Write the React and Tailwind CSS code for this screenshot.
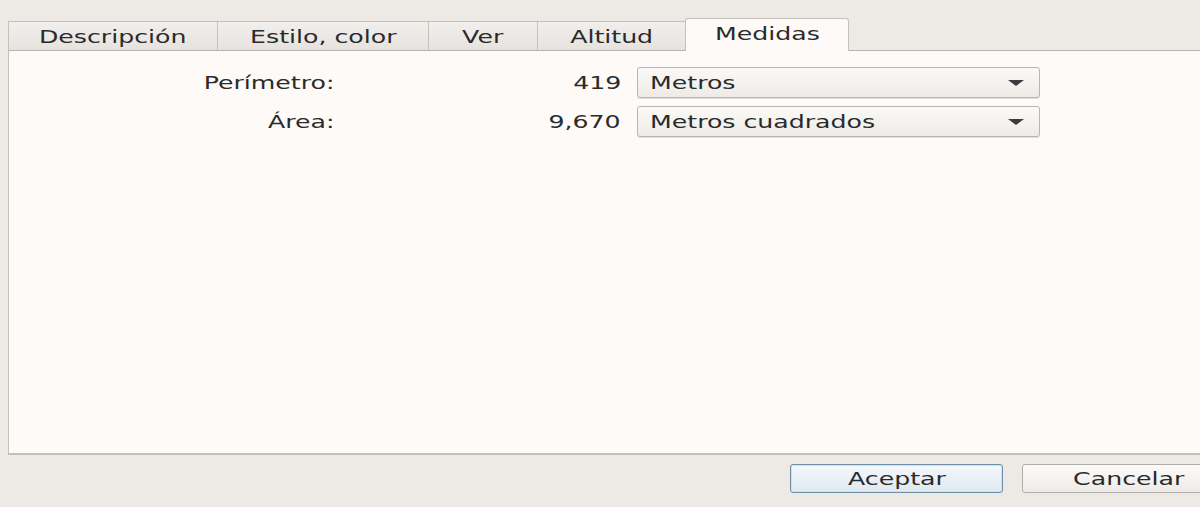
import React from 'react'

const TABS = [
  { label: 'Descripción', w: 'w-[209px]' },
  { label: 'Estilo, color', w: 'w-[211px]' },
  { label: 'Ver', w: 'w-[109px]' },
  { label: 'Altitud', w: 'w-[148px]' },
]

// the shot is stretched sideways, so glyphs are widened to match
function Wide({ children, origin = 'origin-center' }) {
  return <span className={`inline-block scale-x-[1.4] ${origin}`}>{children}</span>
}

function Combo({ value }) {
  return (
    <div className="flex h-[31px] w-[403px] items-center justify-between rounded-[3px] border border-[#b9b6b1] bg-gradient-to-b from-[#fbfaf8] to-[#eeebe7] pl-[12px] pr-[14px] shadow-[0_1px_0_#e2dfdb]">
      <Wide origin="origin-left">{value}</Wide>
      <svg width="18" height="8" viewBox="0 0 18 8">
        <path d="M1 1 L17 1 L9 7 Z" fill="#3a3a3a" />
      </svg>
    </div>
  )
}

export default function App() {
  return (
    <div
      className="h-[507px] w-[1200px] overflow-hidden bg-[#edeae6] text-[18px] text-[#2a2a2a]"
      style={{ fontFamily: '"DejaVu Sans", Verdana, sans-serif' }}
    >
      {/* tab strip */}
      <div className="flex h-[50px] items-end pl-[8px]">
        {TABS.map(t => (
          <div
            key={t.label}
            className={`${t.w} flex h-[29px] shrink-0 items-center justify-center border-t border-l border-[#c4c1bc] bg-gradient-to-b from-[#f1efec] to-[#e6e3df]`}
          >
            <Wide>{t.label}</Wide>
          </div>
        ))}
        <div className="-mb-px flex h-[33px] w-[164px] shrink-0 items-center justify-center rounded-t-[3px] border border-b-0 border-[#c4c1bc] bg-[#fdfaf7] pb-[4px]">
          <Wide>Medidas</Wide>
        </div>
      </div>

      {/* page */}
      <div className="ml-[8px] h-[405px] w-[1200px] border-t border-l border-b-2 border-t-[#b8b5b0] border-l-[#c4c1bc] border-b-[#c2bfba] bg-[#fdfaf7] pt-[16px]">
        <div className="flex items-center">
          <div className="w-[325px] text-right"><Wide origin="origin-right">Perímetro:</Wide></div>
          <div className="w-[287px] text-right"><Wide origin="origin-right">419</Wide></div>
          <div className="ml-[16px]"><Combo value="Metros" /></div>
        </div>
        <div className="mt-[8px] flex items-center">
          <div className="w-[325px] text-right"><Wide origin="origin-right">Área:</Wide></div>
          <div className="w-[287px] text-right"><Wide origin="origin-right">9,670</Wide></div>
          <div className="ml-[16px]"><Combo value="Metros cuadrados" /></div>
        </div>
      </div>

      {/* buttons */}
      <div className="mt-[9px] flex gap-[19px] pl-[790px]">
        <button className="h-[29px] w-[213px] shrink-0 rounded-[3px] border border-[#6f8fa8] bg-gradient-to-b from-[#f3f8fc] to-[#dfe9f1] shadow-[inset_0_0_0_1px_#cfe0ee]">
          <Wide>Aceptar</Wide>
        </button>
        <button className="h-[29px] w-[213px] shrink-0 rounded-[3px] border border-[#b1aea9] bg-gradient-to-b from-[#fcfbfa] to-[#eeebe7]">
          <Wide>Cancelar</Wide>
        </button>
      </div>
    </div>
  )
}
